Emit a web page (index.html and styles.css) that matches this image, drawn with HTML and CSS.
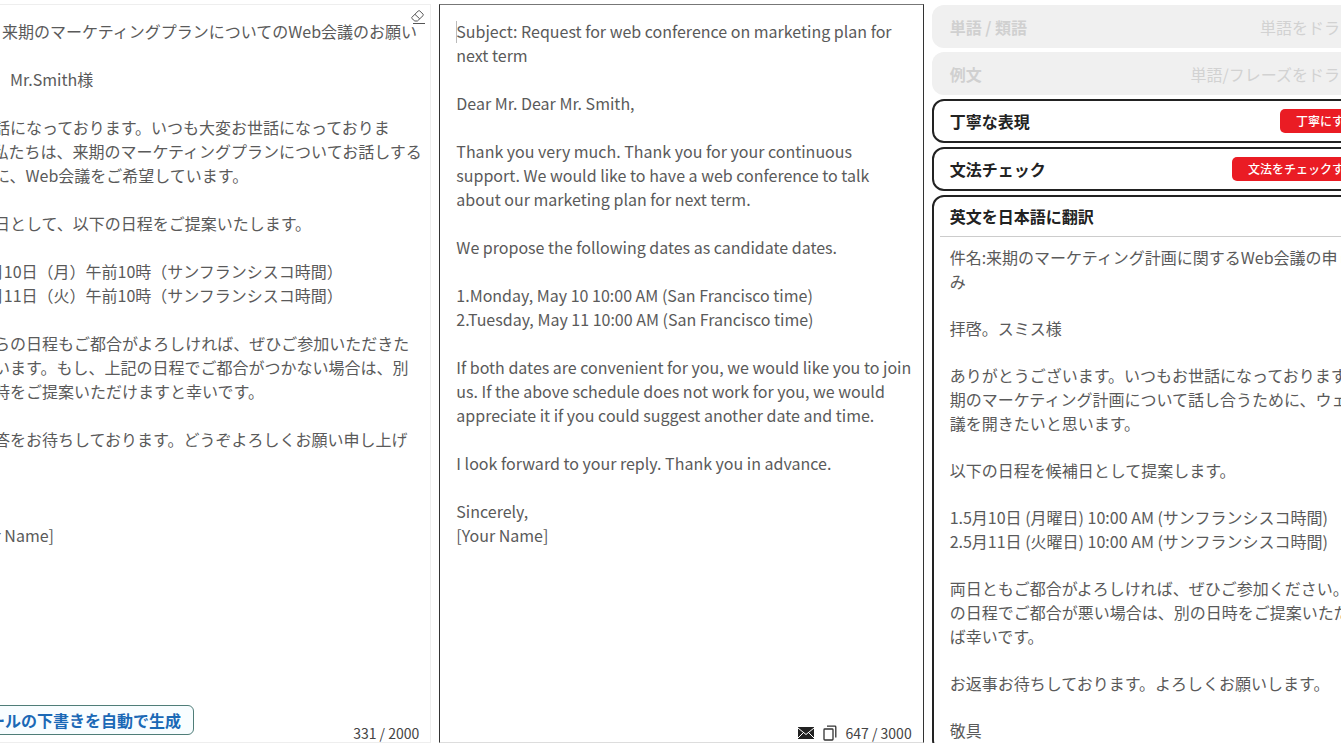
FILE: index.html
```html
<!DOCTYPE html>
<html lang="ja">
<head>
  <meta charset="UTF-8" />
  <meta name="viewport" content="width=device-width, initial-scale=1.0" />
  <title>メール翻訳</title>
  <link rel="stylesheet" href="styles.css">
</head>
<body>
  <main class="workspace">
    <section class="pane pane-source">
      <textarea class="editor" aria-label="日本語">件名: 来期のマーケティングプランについてのWeb会議のお願い

拝啓、Mr.Smith様

お世話になっております。いつも大変お世話になっておりま
す。私たちは、来期のマーケティングプランについてお話しする
ために、Web会議をご希望しています。

候補日として、以下の日程をご提案いたします。

1. 5月10日（月）午前10時（サンフランシスコ時間）
2. 5月11日（火）午前10時（サンフランシスコ時間）

どちらの日程もご都合がよろしければ、ぜひご参加いただきた
く思います。もし、上記の日程でご都合がつかない場合は、別
の日時をご提案いただけますと幸いです。

ご返答をお待ちしております。どうぞよろしくお願い申し上げ
ます

敬具
[Your Name]</textarea>
      <button class="clear-btn" type="button" aria-label="クリア">
        <svg width="16" height="16" viewBox="0 0 16 16" fill="none" stroke="#555" stroke-width="1">
          <path d="M1.9 8.3 L8.3 1.9 Q9 1.3 9.7 1.9 L13.1 5.2 Q13.7 5.9 13.1 6.6 L7.4 12 H4.8 L1.9 9.5 Q1.3 8.9 1.9 8.3 Z" />
          <path d="M5 5.4 L9.7 9.8" />
          <path d="M3 14.5 H15" />
        </svg>
      </button>
      <div class="pane-footer">
        <button class="draft-btn" type="button">メールの下書きを自動で生成</button>
        <span class="count">331 / 2000</span>
      </div>
    </section>

    <section class="pane pane-result">
      <textarea class="editor" aria-label="英語" lang="en">Subject: Request for web conference on marketing plan for next term

Dear Mr. Dear Mr. Smith,

Thank you very much. Thank you for your continuous support. We would like to have a web conference to talk about our marketing plan for next term.

We propose the following dates as candidate dates.

1.Monday, May 10 10:00 AM (San Francisco time)
2.Tuesday, May 11 10:00 AM (San Francisco time)

If both dates are convenient for you, we would like you to join us. If the above schedule does not work for you, we would appreciate it if you could suggest another date and time.

I look forward to your reply. Thank you in advance.

Sincerely,
[Your Name]</textarea>
      <span class="caret"></span>
      <div class="pane-footer">
        <button class="icon-btn" type="button" aria-label="メール">
          <svg width="16" height="12" viewBox="0 0 16 12">
            <rect width="16" height="12" fill="#222" />
            <path d="M0 1 L8 7.5 L16 1 M0 11 L5.5 5.5 M16 11 L10.5 5.5" fill="none" stroke="#fff" stroke-width="1" />
          </svg>
        </button>
        <button class="icon-btn" type="button" aria-label="コピー">
          <svg width="14" height="16" viewBox="0 0 14 16" fill="none" stroke="#333" stroke-width="1.3">
            <rect x="1" y="4" width="9" height="11" rx="0.8" />
            <path d="M4 1.2 H12 Q12.8 1.2 12.8 2 V12.5" />
          </svg>
        </button>
        <span class="count">647 / 3000</span>
      </div>
    </section>

    <aside class="tools">
      <div class="card card-disabled">
        <h2>単語 / 類語</h2>
        <span>単語をドラッグ</span>
      </div>
      <div class="card card-disabled">
        <h2>例文</h2>
        <span>単語/フレーズをドラッグ</span>
      </div>
      <div class="card card-action">
        <h2>丁寧な表現</h2>
        <button class="red-btn" type="button">丁寧にする</button>
      </div>
      <div class="card card-action">
        <h2>文法チェック</h2>
        <button class="red-btn" type="button">文法をチェックする</button>
      </div>
      <article class="translation">
        <h2>英文を日本語に翻訳</h2>
        <div class="translation-body">
          <p>件名:来期のマーケティング計画に関するWeb会議の申し込<br>み</p>
          <p>拝啓。スミス様</p>
          <p>ありがとうございます。いつもお世話になっております。来<br>期のマーケティング計画について話し合うために、ウェブ会<br>議を開きたいと思います。</p>
          <p>以下の日程を候補日として提案します。</p>
          <p>1.5月10日 (月曜日) 10:00 AM (サンフランシスコ時間)<br>2.5月11日 (火曜日) 10:00 AM (サンフランシスコ時間)</p>
          <p>両日ともご都合がよろしければ、ぜひご参加ください。上記<br>の日程でご都合が悪い場合は、別の日時をご提案いただけれ<br>ば幸いです。</p>
          <p>お返事お待ちしております。よろしくお願いします。</p>
          <p>敬具</p>
        </div>
      </article>
    </aside>
  </main>
</body>
</html>
```
FILE: styles.css
```css
* {
  box-sizing: border-box;
  margin: 0;
  padding: 0;
}

body {
  background: #fff;
  color: #5a5a5a;
  font-family: "Noto Sans CJK JP", sans-serif;
  font-size: 16px;
  line-height: 24px;
  overflow: hidden;
}

button,
textarea {
  font: inherit;
  color: inherit;
}

button {
  cursor: pointer;
}

h2 {
  font-size: 16px;
  font-weight: 700;
  color: #222;
}

/* the three columns run past both edges of the window */
.workspace {
  display: grid;
  grid-template-columns: repeat(3, minmax(0, 1fr));
  gap: 8px;
  height: 100vh;
  margin: 0 -75px 0 -53px;
  padding-top: 4px;
}

.pane {
  position: relative;
  display: flex;
  flex-direction: column;
  min-height: 0;
  border: 1px solid #eee;
}

.pane-result {
  border-color: #777 #333 #ddd;
}

.editor {
  flex: 1;
  width: 100%;
  padding: 14px 10px 0 16px;
  border: none;
  outline: none;
  resize: none;
  overflow: hidden;
  background: transparent;
}

.pane-source .editor {
  padding-left: 14px;
  padding-right: 0;
}

.clear-btn {
  position: absolute;
  top: 4px;
  right: 4px;
  display: flex;
  border: none;
  background: none;
}

.caret {
  position: absolute;
  top: 16px;
  left: 16px;
  width: 1px;
  height: 22px;
  background: #bbb;
}

.pane-footer {
  display: flex;
  align-items: flex-end;
  justify-content: flex-end;
  gap: 9px;
  height: 39px;
  padding: 0 11px 0 12px;
}

.pane-source .pane-footer {
  justify-content: space-between;
}

.draft-btn {
  height: 30px;
  margin-bottom: 7px;
  padding: 0 12px;
  border: 1px solid #4f7d78;
  border-radius: 6px;
  background: #f8fdff;
  color: #1b69b6;
  font-weight: 700;
  line-height: 22px;
}

.count {
  color: #444;
  font-size: 14px;
  line-height: 18px;
}

.icon-btn {
  display: flex;
  align-items: center;
  height: 18px;
  border: none;
  background: none;
}

.tools {
  display: flex;
  flex-direction: column;
  gap: 4px;
  min-height: 0;
  padding-top: 1px;
}

.card {
  display: flex;
  flex-shrink: 0;
  align-items: center;
  justify-content: space-between;
  border-radius: 12px;
}

.card-disabled {
  height: 43px;
  padding: 0 44px 0 18px;
  background: #f0f0f0;
  color: #d2d2d2;
}

.card-disabled h2 {
  color: #d0d0d0;
}

.card-action {
  height: 44px;
  padding: 0 42px 0 16px;
  border: 2px solid #222;
}

.red-btn {
  height: 24px;
  padding: 0 16px;
  border: none;
  border-radius: 5px;
  background: #ea1c24;
  color: #fff;
  font-size: 12px;
  font-weight: 500;
  line-height: 24px;
}

.translation {
  flex-shrink: 0;
  padding: 0 6px;
  border: 2px solid #222;
  border-radius: 12px;
}

.translation h2 {
  padding: 7px 10px 8px;
  border-bottom: 1px solid #ccc;
}

.translation-body {
  display: flex;
  flex-direction: column;
  gap: 23px;
  padding: 8px 10px;
}
```
